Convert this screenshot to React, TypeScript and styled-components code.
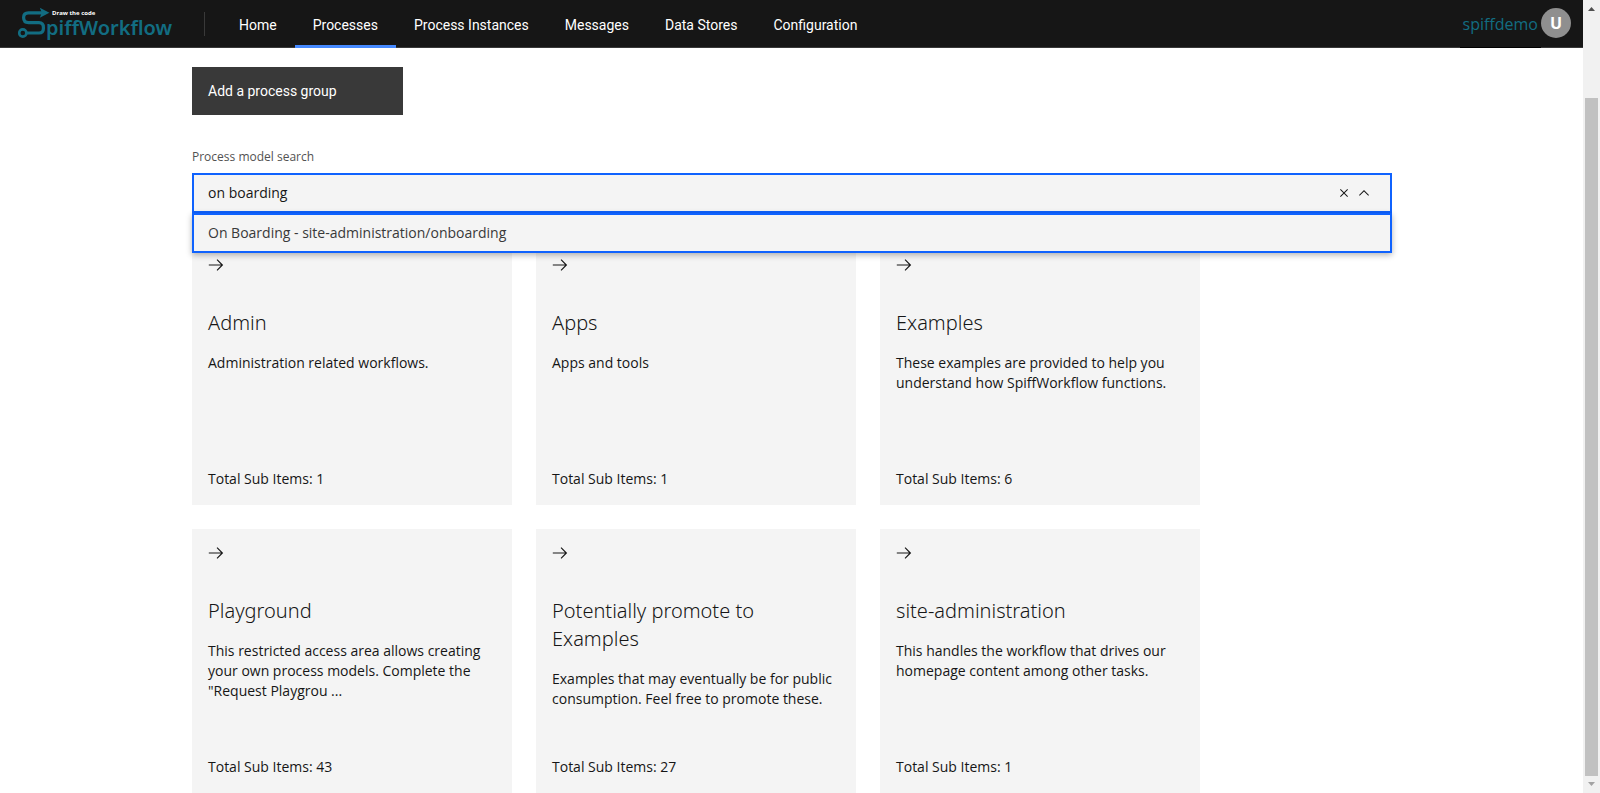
import React, { useState } from 'react';
import styled, { createGlobalStyle } from 'styled-components';

const sans = '"Open Sans", "Noto Sans", sans-serif';
const ui = 'Roboto, "Open Sans", sans-serif';
const teal = '#126d82';

const GlobalStyle = createGlobalStyle`
  *, *::before, *::after { box-sizing: border-box; }
  body {
    margin: 0;
    background: #fff;
    color: #161616;
    font-family: ${sans};
    font-size: 14px;
    line-height: 20px;
  }
  h2, p, ul { margin: 0; padding: 0; }
  button, input { font: inherit; color: inherit; }
`;

const Shell = styled.div`
  display: grid;
  grid-template-columns: minmax(0, 1fr) 17px;
  align-items: start;
`;

const Header = styled.header`
  display: flex;
  align-items: center;
  height: 48px;
  padding: 0 12px 0 16px;
  background: #161616;
  box-shadow: inset 0 -1px #393939;
`;

const LogoLink = styled.a`
  display: block;
  height: 48px;
  margin-right: 32px;
`;

const LogoText = styled.text`
  font-family: "Noto Sans", sans-serif;
  font-size: 20px;
  font-weight: 600;
  fill: ${teal};
`;

const LogoTagline = styled.text`
  font-family: ${sans};
  font-size: 6px;
  font-weight: 700;
  fill: #fff;
`;

const Divider = styled.span`
  width: 1px;
  height: 24px;
  margin-right: 16px;
  background: #393939;
`;

const Nav = styled.nav`
  display: flex;
  flex: 1;
`;

const NavLink = styled.a<{ $active?: boolean }>`
  height: 47px;
  padding: 0 18px;
  line-height: 48px;
  font-family: ${ui};
  color: #fff;
  white-space: nowrap;
  text-decoration: none;
  box-shadow: ${(p) => (p.$active ? 'inset 0 -3px #4589ff' : 'none')};
`;

const UserLink = styled.a`
  height: 48px;
  padding: 0 3px;
  border-bottom: 1px solid #000;
  background: #161616;
  color: ${teal};
  font-size: 16px;
  line-height: 48px;
  text-decoration: none;
`;

const Avatar = styled.button`
  width: 30px;
  height: 30px;
  margin-bottom: 2px;
  padding: 0;
  border: 0;
  border-radius: 50%;
  background: #8f8f8f;
  color: #fff;
  font-size: 16px;
  font-weight: 700;
  line-height: 30px;
`;

const Main = styled.main`
  padding: 19px 191px 0 192px;
`;

const AddButton = styled.button`
  display: block;
  width: 211px;
  height: 48px;
  padding: 0 16px;
  border: 0;
  background: #393939;
  color: #fff;
  font-family: ${ui};
  text-align: left;
`;

const SearchLabel = styled.label`
  display: block;
  margin: 34px 0 8px;
  color: #525252;
  font-size: 12px;
  line-height: 16px;
`;

const ComboBox = styled.div`
  position: relative;
  margin-bottom: 28px;
`;

const Field = styled.div`
  display: flex;
  align-items: center;
  height: 40px;
  padding: 0 16px 0 14px;
  border: 2px solid #0f62fe;
  background: #f4f4f4;
`;

const SearchInput = styled.input`
  flex: 1;
  min-width: 0;
  padding: 0;
  border: 0;
  outline: 0;
  background: transparent;
`;

const IconButton = styled.button`
  display: grid;
  place-items: center;
  width: 20px;
  height: 24px;
  padding: 0;
  border: 0;
  background: transparent;
`;

const Menu = styled.ul`
  position: absolute;
  top: 100%;
  left: 0;
  right: 0;
  z-index: 1;
  list-style: none;
  box-shadow: 0 2px 6px rgba(0, 0, 0, 0.3);
`;

const Option = styled.li`
  height: 40px;
  padding: 0 14px;
  border: 2px solid #0f62fe;
  background: #f4f4f4;
  color: #393939;
  line-height: 36px;
`;

const Tiles = styled.div`
  display: grid;
  grid-template-columns: repeat(auto-fill, 320px);
  gap: 24px;
  max-width: 1010px;
`;

const Tile = styled.a`
  display: flex;
  flex-direction: column;
  min-height: 264px;
  padding: 16px;
  background: #f4f4f4;
  color: inherit;
  text-decoration: none;
`;

const TileTitle = styled.h2`
  margin: 36px 0 16px;
  font-family: "Noto Sans", sans-serif;
  font-size: 20px;
  font-weight: 300;
  line-height: 28px;
`;

const TileTotal = styled.p`
  margin-top: auto;
`;

const ScrollBar = styled.div`
  position: sticky;
  top: 0;
  display: flex;
  flex-direction: column;
  height: 100vh;
  background: #f1f1f1;
`;

const ScrollGap = styled.div`
  flex: 81;
`;

const ScrollThumb = styled.div`
  flex: 678;
  margin: 0 2px;
  background: #c1c1c1;
`;

function Logo() {
  return (
    <svg width="156" height="48" viewBox="16 0 156 48" role="img" aria-label="SpiffWorkflow" display="block" overflow="visible">
      <g fill="none" stroke={teal} strokeWidth="3.2">
        <path d="M43 12.8H28.5Q23.6 12.8 23.6 17.5Q23.6 22.6 28.5 22.6H39Q43.4 22.6 43.4 27.5V28.5Q43.4 33 39 33H27" />
        <circle cx="22.8" cy="33" r="3.6" strokeWidth="2.6" />
      </g>
      <path d="M39.8 7.8L49.4 12.8L39.8 17.8L41.8 12.8Z" fill={teal} />
      <LogoTagline x="52" y="15">Draw the code</LogoTagline>
      <LogoText x="46" y="35">piffWorkflow</LogoText>
    </svg>
  );
}

function ArrowIcon() {
  return (
    <svg width="16" height="16" viewBox="0 0 20 20" aria-hidden="true">
      <path d="M11.8 2.8 10.8 3.8 16.2 9.3 1 9.3 1 10.7 16.2 10.7 10.8 16.1 11.8 17.2 19 10z" fill="#161616" />
    </svg>
  );
}

function CloseIcon() {
  return (
    <svg width="16" height="16" viewBox="0 0 32 32" aria-hidden="true">
      <path d="M17.4 16 24 9.4 22.6 8 16 14.6 9.4 8 8 9.4 14.6 16 8 22.6 9.4 24 16 17.4 22.6 24 24 22.6z" fill="#161616" />
    </svg>
  );
}

function ChevronUpIcon() {
  return (
    <svg width="16" height="16" viewBox="0 0 16 16" aria-hidden="true">
      <path d="M8 5 13 10 12.3 10.7 8 6.4 3.7 10.7 3 10z" fill="#161616" />
    </svg>
  );
}

const navItems = ['Home', 'Processes', 'Process Instances', 'Messages', 'Data Stores', 'Configuration'];

const groups = [
  { title: 'Admin', text: 'Administration related workflows.', total: 1 },
  { title: 'Apps', text: 'Apps and tools', total: 1 },
  { title: 'Examples', text: 'These examples are provided to help you understand how SpiffWorkflow functions.', total: 6 },
  {
    title: 'Playground',
    text: 'This restricted access area allows creating your own process models. Complete the "Request Playgrou ...',
    total: 43,
  },
  {
    title: 'Potentially promote to Examples',
    text: 'Examples that may eventually be for public consumption. Feel free to promote these.',
    total: 27,
  },
  { title: 'site-administration', text: 'This handles the workflow that drives our homepage content among other tasks.', total: 1 },
];

export default function App() {
  const [query, setQuery] = useState('on boarding');
  const [open, setOpen] = useState(true);

  return (
    <>
      <GlobalStyle />
      <Shell>
        <div>
          <Header>
            <LogoLink href="#">
              <Logo />
            </LogoLink>
            <Divider />
            <Nav>
              {navItems.map((item) => (
                <NavLink key={item} href="#" $active={item === 'Processes'}>
                  {item}
                </NavLink>
              ))}
            </Nav>
            <UserLink href="#">spiffdemo</UserLink>
            <Avatar type="button">U</Avatar>
          </Header>
          <Main>
            <AddButton type="button">Add a process group</AddButton>
            <SearchLabel htmlFor="model-search">Process model search</SearchLabel>
            <ComboBox>
              <Field>
                <SearchInput
                  id="model-search"
                  role="combobox"
                  aria-expanded={open}
                  aria-controls="model-options"
                  value={query}
                  onChange={(e) => setQuery(e.target.value)}
                />
                <IconButton type="button" aria-label="Clear selected item" onClick={() => setQuery('')}>
                  <CloseIcon />
                </IconButton>
                <IconButton type="button" aria-label="Toggle menu" onClick={() => setOpen(!open)}>
                  <ChevronUpIcon />
                </IconButton>
              </Field>
              {open && (
                <Menu id="model-options" role="listbox">
                  <Option role="option" aria-selected="true">
                    On Boarding - site-administration/onboarding
                  </Option>
                </Menu>
              )}
            </ComboBox>
            <Tiles>
              {groups.map((group) => (
                <Tile key={group.title} href="#">
                  <ArrowIcon />
                  <TileTitle>{group.title}</TileTitle>
                  <p>{group.text}</p>
                  <TileTotal>Total Sub Items: {group.total}</TileTotal>
                </Tile>
              ))}
            </Tiles>
          </Main>
        </div>
        <ScrollBar aria-hidden="true">
          <svg width="17" height="17" viewBox="0 0 17 17">
            <path d="M5 11 8.5 7 12 11z" fill="#505050" />
          </svg>
          <ScrollGap />
          <ScrollThumb />
          <svg width="17" height="17" viewBox="0 0 17 17">
            <path d="M5 6 8.5 10 12 6z" fill="#a3a3a3" />
          </svg>
        </ScrollBar>
      </Shell>
    </>
  );
}
